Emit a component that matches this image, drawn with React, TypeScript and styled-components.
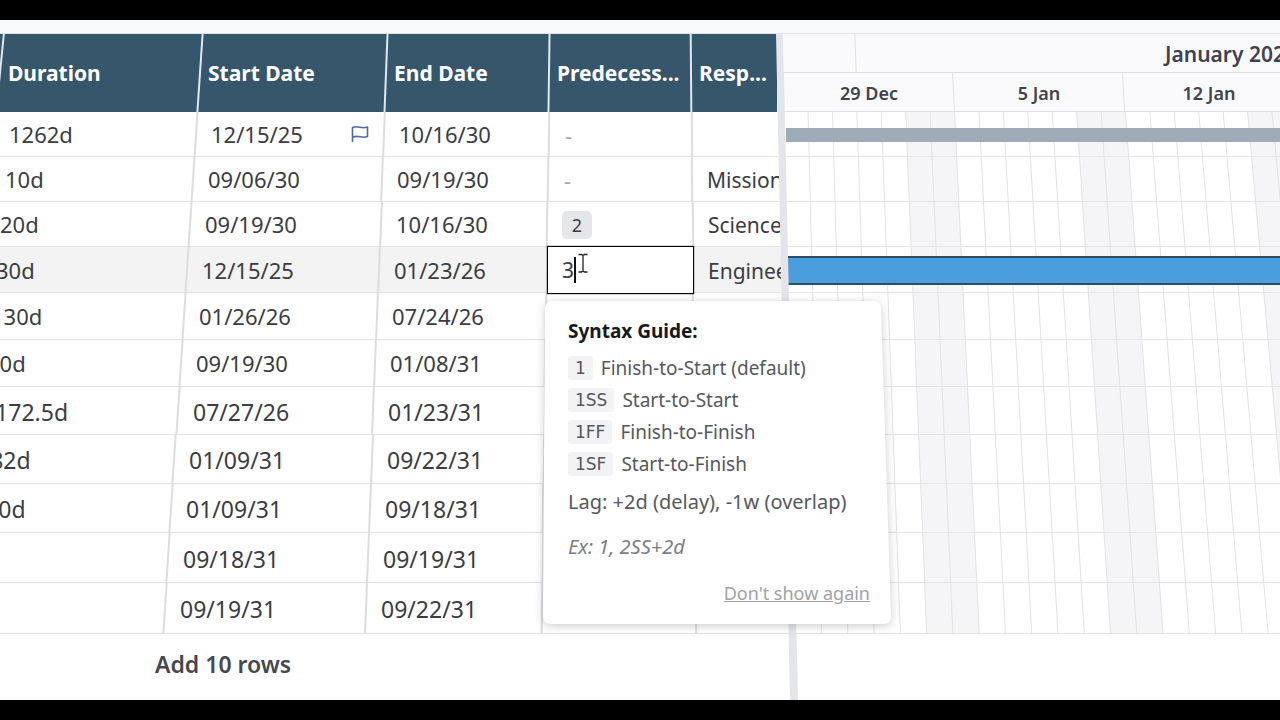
import React from 'react';
import styled, { createGlobalStyle } from 'styled-components';

const GlobalStyle = createGlobalStyle`
  * { box-sizing: border-box; }
  body {
    margin: 0;
    background: #000;
    color: #3a3d42;
    font-family: "Noto Sans", "Open Sans", sans-serif;
    font-size: 22px;
  }
  button, input { font: inherit; color: inherit; }
`;

/* The sheet leans back from the viewer: every column edge is a line that
   drifts sideways by a fixed amount for each pixel further down. */
const TOP = 34;
const EDGES = [
  { x: 4, drift: -0.098 },
  { x: 203, drift: -0.067 },
  { x: 388, drift: -0.0385 },
  { x: 550, drift: -0.014 },
  { x: 691, drift: 0.008 },
  { x: 776, drift: 0.021 },
];
const edgesAt = (y: number) => EDGES.map((e) => Math.round(e.x + (y - TOP) * e.drift));
const lean = (drift: number) => (Math.atan(drift) * 180) / Math.PI;

const HEADER_HEIGHT = 78;

type Task = {
  height: number;
  duration: string;
  start: string;
  end: string;
  predecessor?: string;
  owner?: string;
  flagged?: boolean;
  editing?: boolean;
};

const TASKS: Task[] = [
  { height: 45, duration: '1262d', start: '12/15/25', end: '10/16/30', predecessor: '-', flagged: true },
  { height: 45, duration: '10d', start: '09/06/30', end: '09/19/30', predecessor: '-', owner: 'Mission' },
  { height: 45, duration: '20d', start: '09/19/30', end: '10/16/30', predecessor: '2', owner: 'Science' },
  { height: 46, duration: '30d', start: '12/15/25', end: '01/23/26', predecessor: '3', owner: 'Engineering', editing: true },
  { height: 47, duration: '130d', start: '01/26/26', end: '07/24/26' },
  { height: 47, duration: '80d', start: '09/19/30', end: '01/08/31' },
  { height: 48, duration: '1172.5d', start: '07/27/26', end: '01/23/31' },
  { height: 49, duration: '182d', start: '01/09/31', end: '09/22/31' },
  { height: 49, duration: '180d', start: '01/09/31', end: '09/18/31' },
  { height: 50, duration: '', start: '09/18/31', end: '09/19/31' },
  { height: 51, duration: '', start: '09/19/31', end: '09/22/31' },
];

const HEADINGS = ['Duration', 'Start Date', 'End Date', 'Predecess...', 'Resp...'];

const Page = styled.div`
  min-height: 100vh;
  padding: 20px 0;
  display: flex;
  flex-direction: column;
  overflow: hidden;
`;

const Sheet = styled.main`
  flex: 1;
  display: flex;
  flex-direction: column;
  background: #fff;
`;

const TopStrip = styled.div`
  height: 14px;
  background: #f9fafc;
  border-bottom: 1px solid #e3e5e9;
`;

const Split = styled.div`
  flex: 1;
  display: flex;
  position: relative;
`;

const TablePane = styled.section`
  flex: 0 0 784px;
  min-width: 0;
  display: flex;
  flex-direction: column;
`;

const Table = styled.table`
  display: block;
`;

const Head = styled.thead`
  display: block;
`;

const Body = styled.tbody`
  display: block;
`;

const Row = styled.tr<{ $y: number; $height: number; $active?: boolean }>`
  display: grid;
  height: ${(p) => p.$height}px;
  ${(p) => {
    const e = edgesAt(p.$y + p.$height / 2);
    const widths = e.slice(1).map((x, i) => `${x - e[i]}px`);
    return `margin-left: ${e[0]}px; width: ${e[5] - e[0]}px; grid-template-columns: ${widths.join(' ')};`;
  }}
  background: ${(p) => (p.$active ? '#f3f3f3' : '#fff')};
`;

const HeadRow = styled(Row)`
  background: #35566b;
`;

const HeadCell = styled.th<{ $lean: number }>`
  position: relative;
  display: flex;
  align-items: center;
  padding: 0 0 0 8px;
  color: #fff;
  font-size: 21px;
  font-weight: 700;
  white-space: nowrap;

  &::before {
    content: '';
    position: absolute;
    top: 0;
    bottom: 0;
    left: -1px;
    width: 2px;
    background: #dfe8f0;
    transform: skewX(${(p) => p.$lean}deg);
  }
`;

const Cell = styled.td<{ $lean: number }>`
  position: relative;
  display: flex;
  align-items: center;
  min-width: 0;
  padding: 2px 0 0 15px;
  border-bottom: 1px solid #e2e2e4;
  line-height: 30px;
  white-space: nowrap;

  &::before {
    content: '';
    position: absolute;
    top: 0;
    bottom: -1px;
    left: -1px;
    width: 2px;
    background: #dcdde0;
    transform: skewX(${(p) => p.$lean}deg);
  }
`;

const ValueCell = styled(Cell)<{ $large: boolean }>`
  padding-top: ${(p) => (p.$large ? 2 : 0)}px;
  font-size: ${(p) => (p.$large ? 23 : 22)}px;
`;

const Owner = styled.span`
  overflow: hidden;
  font-size: 21px;
`;

const Dash = styled.span`
  padding-left: 1px;
  color: #a3a6ab;
`;

const Chip = styled.span`
  display: flex;
  align-items: center;
  justify-content: center;
  width: 30px;
  height: 28px;
  border-radius: 5px;
  background: #e4e6e9;
  font-size: 18px;
`;

const FlagIcon = styled.svg`
  margin-left: auto;
  margin-right: 15px;
`;

const Editor = styled.div`
  position: absolute;
  z-index: 3;
  top: -1px;
  left: 0;
  right: -1px;
  bottom: -2px;
  display: flex;
  align-items: center;
  padding-left: 14px;
  border: 1px solid #08090b;
  box-shadow: 0 0 1px #08090b;
  background: #fff;
`;

const EditorInput = styled.input`
  width: 12px;
  padding: 0;
  border: 0;
  outline: 0;
  background: none;
  font-size: 21px;
`;

const Caret = styled.span`
  width: 2px;
  height: 26px;
  background: #111;
`;

const Pointer = styled.svg`
  position: absolute;
  top: 6px;
  left: 29px;
`;

const Guide = styled.aside`
  position: absolute;
  z-index: 4;
  top: 54px;
  left: -4px;
  width: 350px;
  padding: 17px 23px 20px 25px;
  color: #55585d;
  font-size: 19px;
  line-height: 26px;
`;

const GuideShape = styled.svg`
  position: absolute;
  z-index: -1;
  top: 0;
  left: 0;
  overflow: visible;
  filter: drop-shadow(0 2px 5px rgba(20, 25, 35, 0.22));
`;

const GuideTitle = styled.h2`
  margin: 0 0 8px;
  color: #17191d;
  font-size: 19px;
  font-weight: 700;
`;

const GuideList = styled.ul`
  margin: 0;
  padding: 0;
  list-style: none;
`;

const GuideItem = styled.li`
  display: flex;
  align-items: center;
  gap: 8px;
  height: 32px;
`;

const Code = styled.code`
  padding: 0 7px;
  border-radius: 3px;
  background: #f3f3f6;
  font-family: "DejaVu Sans", sans-serif;
  font-size: 17px;
  line-height: 24px;
`;

const GuideText = styled.p`
  margin: 9px 0 0;
  font-size: 20px;
`;

const Example = styled.p`
  margin: 19px 0 0;
  color: #7b7e83;
  font-size: 20px;
  font-style: italic;
`;

const Dismiss = styled.button`
  display: block;
  margin: 20px 0 0 auto;
  padding: 0;
  border: 0;
  background: none;
  color: #a0a2a6;
  font-size: 18px;
  text-decoration: underline;
`;

const Footer = styled.div`
  flex: 1;
  padding: 15px 0 0 155px;
`;

const AddRows = styled.button`
  padding: 0;
  border: 0;
  background: none;
  color: #44484f;
  font-size: 23px;
  font-weight: 600;
  line-height: 30px;
`;

const Divider = styled.div`
  position: absolute;
  z-index: 1;
  top: 0;
  bottom: 0;
  left: 776px;
  width: 22px;
  background: #e3e5ea;
  clip-path: polygon(0 0, 7px 0, 100% 100%, 14px 100%);
`;

const ChartPane = styled.section`
  flex: 1;
  min-width: 0;
  overflow: hidden;
`;

const Band = styled.div<{ $height: number }>`
  display: flex;
  height: ${(p) => p.$height}px;
  background: #fafafc;
  border-bottom: 1px solid #dfe1e5;
`;

const Period = styled.div<{ $width: number; $lean: number; $size: number }>`
  position: relative;
  flex: 0 0 ${(p) => p.$width}px;
  display: flex;
  align-items: center;
  justify-content: center;
  padding-top: 2px;
  color: #3f434c;
  font-size: ${(p) => p.$size}px;
  font-weight: 600;

  &::after {
    content: '';
    position: absolute;
    top: 0;
    bottom: 0;
    right: 0;
    width: 1px;
    background: #dfe1e5;
    transform: skewX(${(p) => p.$lean}deg);
  }
`;

const Chart = styled.svg`
  display: block;
  width: 100%;
`;

const WEEKS = ['29 Dec', '5 Jan', '12 Jan', '19 Jan', '26 Jan'];
const DAYS = Array.from({ length: 60 }, (_, i) => i);
const WEEKEND_STARTS = [4, 11, 18, 25, 32, 39, 46, 53];
const GRID_HEIGHT = TASKS.reduce((sum, t) => sum + t.height, 0);
const dayTop = (k: number) => 24 + k * 24.42;
const dayBottom = (k: number) => 37.6 + k * 26.27;

let offset = TOP + HEADER_HEIGHT;
const PLACED = TASKS.map((task) => {
  const y = offset;
  offset += task.height;
  return { ...task, y };
});

const RULES = [
  ['1', 'Finish-to-Start (default)'],
  ['1SS', 'Start-to-Start'],
  ['1FF', 'Finish-to-Finish'],
  ['1SF', 'Start-to-Finish'],
];

function SyntaxGuide() {
  return (
    <Guide aria-label="Syntax guide">
      <GuideShape width="350" height="324" aria-hidden="true">
        <path
          d="M10 0H330Q338 0 338 8L348 315Q348 323 340 323H8Q0 323 0 315L2 8Q2 0 10 0Z"
          fill="#fff"
        />
      </GuideShape>
      <GuideTitle>Syntax Guide:</GuideTitle>
      <GuideList>
        {RULES.map(([code, label]) => (
          <GuideItem key={code}>
            <Code>{code}</Code>
            {label}
          </GuideItem>
        ))}
      </GuideList>
      <GuideText>Lag: +2d (delay), -1w (overlap)</GuideText>
      <Example>Ex: 1, 2SS+2d</Example>
      <Dismiss type="button">Don't show again</Dismiss>
    </Guide>
  );
}

function Predecessor({ task }: { task: Task }) {
  if (task.editing) {
    return (
      <>
        <Editor>
          <EditorInput aria-label="Predecessors" defaultValue={task.predecessor} />
          <Caret />
          <Pointer width="12" height="22" viewBox="0 0 12 22" fill="none" stroke="#222" aria-hidden="true">
            <path d="M1.500 1.500H4.500L6 2.500L7.500 1.500H10.500M6 2.500V18M1.500 19H4.500L6 18L7.500 19H10.500" strokeWidth="1.3" />
          </Pointer>
        </Editor>
        <SyntaxGuide />
      </>
    );
  }
  if (task.predecessor === '-') return <Dash>-</Dash>;
  return task.predecessor ? <Chip>{task.predecessor}</Chip> : null;
}

function TaskTable() {
  const leans = EDGES.map((e) => lean(e.drift));
  return (
    <Table>
      <Head>
        <HeadRow $y={TOP} $height={HEADER_HEIGHT}>
          {HEADINGS.map((heading, i) => (
            <HeadCell key={heading} $lean={leans[i]} scope="col">
              {heading}
            </HeadCell>
          ))}
        </HeadRow>
      </Head>
      <Body>
        {PLACED.map((task, i) => {
          const large = i > 5;
          return (
            <Row key={i} $y={task.y} $height={task.height} $active={task.editing}>
              <ValueCell $lean={leans[0]} $large={large}>{task.duration}</ValueCell>
              <ValueCell $lean={leans[1]} $large={large}>
                {task.start}
                {task.flagged && (
                  <FlagIcon width="18" height="18" viewBox="0 0 18 18" fill="none" stroke="#4a6ba5" strokeWidth="1.6" aria-label="Flag">
                    <path d="M1.500 16.500V2.500C4 1.300 6.500 1.700 9 2.300S14 2.900 16.500 2V11.500C14 12.600 11.500 12.400 9 11.800S4 11.200 1.500 12.200" strokeLinecap="round" strokeLinejoin="round" />
                  </FlagIcon>
                )}
              </ValueCell>
              <ValueCell $lean={leans[2]} $large={large}>{task.end}</ValueCell>
              <Cell $lean={leans[3]}>
                <Predecessor task={task} />
              </Cell>
              <Cell $lean={leans[4]}>{task.owner && <Owner>{task.owner}</Owner>}</Cell>
            </Row>
          );
        })}
      </Body>
    </Table>
  );
}

function Timeline() {
  return (
    <ChartPane aria-label="Timeline">
      <Band $height={39}>
        <Period $width={72} $lean={2} $size={21} />
        <Period $width={750} $lean={2} $size={21}>January 2026</Period>
      </Band>
      <Band $height={39}>
        {WEEKS.map((week) => (
          <Period key={week} $width={170} $lean={3} $size={18}>
            {week}
          </Period>
        ))}
      </Band>
      <Chart height={GRID_HEIGHT} role="img" aria-label="Task bars">
        {WEEKEND_STARTS.map((k) => (
          <polygon
            key={k}
            points={`${dayTop(k)},0 ${dayTop(k + 2)},0 ${dayBottom(k + 2)},${GRID_HEIGHT} ${dayBottom(k)},${GRID_HEIGHT}`}
            fill="#f5f5f8"
          />
        ))}
        {DAYS.map((k) => (
          <line key={k} x1={dayTop(k)} y1="0" x2={dayBottom(k)} y2={GRID_HEIGHT} stroke="#e2e2e5" />
        ))}
        {PLACED.map((task) => (
          <rect key={task.y} y={task.y + task.height - 113} width="100%" height="1" fill="#e4e4e7" />
        ))}
        <rect x="2" y="16" width="100%" height="14" fill="#9eabb8" />
        <rect x="4" y="144" width="100%" height="29" fill="#2d4d69" />
        <rect x="4" y="146" width="100%" height="25" fill="#4a9edd" />
      </Chart>
    </ChartPane>
  );
}

export default function App() {
  return (
    <Page>
      <GlobalStyle />
      <Sheet>
        <TopStrip />
        <Split>
          <TablePane>
            <TaskTable />
            <Footer>
              <AddRows type="button">Add 10 rows</AddRows>
            </Footer>
          </TablePane>
          <Divider />
          <Timeline />
        </Split>
      </Sheet>
    </Page>
  );
}
